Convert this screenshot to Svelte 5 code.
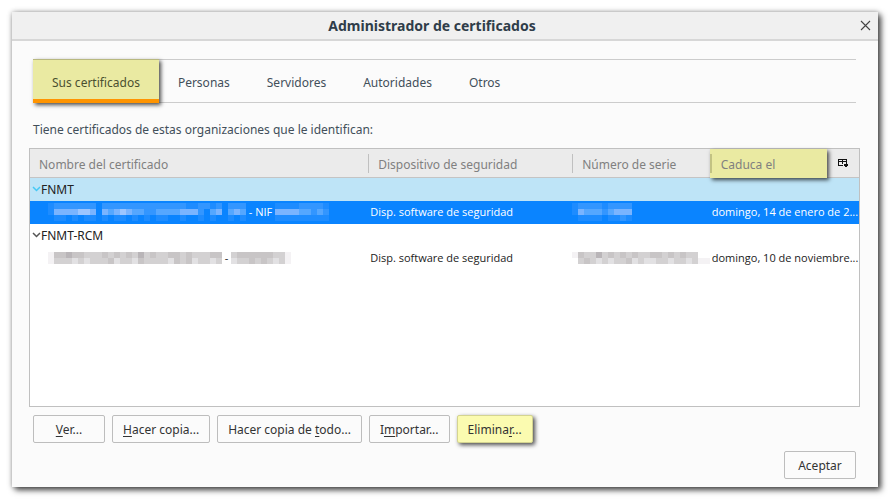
<script lang="ts">
    type Cert = {
        name: string;
        owner: string[];
        idBlocks: string[];
        device: string;
        serial: string[];
        expires: string;
    };

    type Group = {
        org: string;
        certs: Cert[];
    };

    const tabs = ["Sus certificados", "Personas", "Servidores", "Autoridades", "Otros"];
    let activeTab = $state("Sus certificados");
    let selected = $state("FNMT");

    // Hidden data is drawn as rows of cells, one digit per cell (shade index)
    const blues = ["#0a84ff", "#1e8cff", "#3396ff", "#55a7ff", "#7ab4ff", "#9cc5ff"];
    const greys = ["#ffffff", "#f4f2f4", "#e2e1e3", "#d3d1d2", "#c8c5c6", "#b9b5b8"];

    const groups: Group[] = [
        {
            org: "FNMT",
            certs: [
                {
                    name: " - NIF ",
                    owner: [
                        "122222220222222222222221122120222",
                        "144445540434543322333344420340343",
                        "011010110101101010110010010100101",
                    ],
                    idBlocks: ["111122221", "444433232", "111111111"],
                    device: "Disp. software de seguridad",
                    serial: ["1222212222", "1433323444", "0111101121"],
                    expires: "domingo, 14 de enero de 2...",
                },
            ],
        },
        {
            org: "FNMT-RCM",
            certs: [
                {
                    name: " - ",
                    owner: ["14454433343434353433443433344", "13332323334233243333243423323"],
                    idBlocks: ["3444444331", "2334343231"],
                    device: "Disp. software de seguridad",
                    serial: ["14335343434334434343300", "03432323342322332332311"],
                    expires: "domingo, 10 de noviembre...",
                },
            ],
        },
    ];
</script>

{#snippet mosaic(rows: string[], shades: string[])}
    <svg
        class="mosaic"
        width={rows[0].length * 6}
        height={rows.length * 6}
        shape-rendering="crispEdges"
        aria-hidden="true"
    >
        {#each rows as row, y}
            {#each row.split("") as cell, x}
                <rect x={x * 6} y={y * 6} width="6" height="6" fill={shades[Number(cell)]} />
            {/each}
        {/each}
    </svg>
{/snippet}

<div class="dialog" role="dialog" aria-labelledby="title">
    <header>
        <h1 id="title">Administrador de certificados</h1>
        <button class="close" aria-label="Cerrar">
            <svg width="11" height="11" viewBox="0 0 11 11">
                <path d="M1 1L10 10M10 1L1 10" stroke="#444" stroke-width="1.1" fill="none" />
            </svg>
        </button>
    </header>

    <main>
        <div class="tabs" role="tablist">
            {#each tabs as tab}
                <button
                    role="tab"
                    class:active={activeTab === tab}
                    aria-selected={activeTab === tab}
                    onclick={() => (activeTab = tab)}>{tab}</button
                >
            {/each}
        </div>

        <p id="intro">Tiene certificados de estas organizaciones que le identifican:</p>

        <div class="tree">
            <table aria-labelledby="intro">
                <colgroup>
                    <col class="c-name" />
                    <col class="c-device" />
                    <col class="c-serial" />
                    <col />
                    <col class="c-picker" />
                </colgroup>
                <thead>
                    <tr>
                        <th><div>Nombre del certificado</div></th>
                        <th><div class="sep">Dispositivo de seguridad</div></th>
                        <th><div class="sep">Número de serie</div></th>
                        <th class="marked"><div class="sep">Caduca el</div></th>
                        <th class="picker">
                            <button aria-label="Columnas">
                                <svg width="10" height="9" viewBox="0 0 10 9" shape-rendering="crispEdges">
                                    <path
                                        d="M0 0H9V1H0ZM0 2H9V3H0ZM0 1H1V7H0ZM4 1H5V2H4ZM8 1H9V5H8ZM0 6H5V7H0ZM4 3H5V5H4Z"
                                        fill="#111"
                                    />
                                    <path d="M6 5H10V6H6ZM6 6H10V7H6ZM7 7H9V8H7Z" fill="#111" />
                                </svg>
                            </button>
                        </th>
                    </tr>
                </thead>
                <tbody>
                    {#each groups as group}
                        <tr class="group" class:hot={selected === group.org}>
                            <td colspan="5">
                                <button>
                                    <svg width="9" height="8" viewBox="0 0 9 8">
                                        <path
                                            d="M1 2L4.5 5.5L8 2"
                                            stroke="currentColor"
                                            stroke-width="1.5"
                                            fill="none"
                                        />
                                    </svg>
                                    <span>{group.org}</span>
                                </button>
                            </td>
                        </tr>
                        {#each group.certs as cert}
                            {@const shades = selected === group.org ? blues : greys}
                            <tr
                                class="cert"
                                class:selected={selected === group.org}
                                onclick={() => (selected = group.org)}
                            >
                                <td class="name">
                                    <div>
                                        {@render mosaic(cert.owner, shades)}
                                        <span>{cert.name}</span>
                                        {@render mosaic(cert.idBlocks, shades)}
                                    </div>
                                </td>
                                <td>{cert.device}</td>
                                <td class="serial">
                                    <div>
                                        {@render mosaic(cert.serial, shades)}
                                    </div>
                                </td>
                                <td colspan="2">{cert.expires}</td>
                            </tr>
                        {/each}
                    {/each}
                </tbody>
            </table>
        </div>

        <div class="actions">
            <button><u>V</u>er...</button>
            <button><u>H</u>acer copia...</button>
            <button>Hacer copia de <u>t</u>odo...</button>
            <button>I<u>m</u>portar...</button>
            <button class="marked">Elimina<u>r</u>...</button>
        </div>
        <div class="footer">
            <button>Aceptar</button>
        </div>
    </main>
</div>

<style>
    :global(body) {
        margin: 0;
        background: #fff;
    }
    .dialog,
    button {
        font-family: "Noto Sans", "Open Sans", sans-serif;
    }
    button {
        font-size: 12px;
        color: #333;
        background: none;
        border: none;
        padding: 0;
        white-space: nowrap;
    }
    .dialog {
        box-sizing: border-box;
        display: flex;
        flex-direction: column;
        margin: 12px;
        min-height: calc(100vh - 24px);
        background: #fbfbfb;
        font-size: 12px;
        color: #424f5a;
        box-shadow:
            0 0 5px rgba(0, 0, 0, 0.3),
            3px 3px 6px rgba(0, 0, 0, 0.7);
    }
    header {
        display: flex;
        align-items: center;
        height: 27px;
        background: #f0f0f0;
        border-bottom: 2px solid #d7d7d7;
    }
    h1 {
        flex: 1;
        margin: 0;
        text-align: center;
        font-size: 14px;
        line-height: 20px;
        color: #2f3d49;
    }
    .close {
        width: 26px;
        height: 26px;
        display: grid;
        place-items: center;
    }
    main {
        flex: 1;
        display: flex;
        flex-direction: column;
        padding: 18px 18px 8px 17px;
    }
    .tabs {
        display: flex;
        gap: 1px;
        margin: 0 4px;
        border-top: 1px solid #ccc;
        border-bottom: 1px solid #ccc;
    }
    .tabs button {
        height: 42px;
        padding: 2px 18px 0;
        color: #424f5a;
    }
    .tabs .active {
        margin: -1px 0;
        height: 44px;
        padding: 6px 19px 0;
        background: #eaeaa2;
        color: #4a5030;
        border-top: 1px solid #b8b880;
        border-bottom: 4px solid #ff9400;
        box-shadow: 2px 2px 4px rgba(0, 0, 0, 0.7);
    }
    p {
        margin: 18px 4px 9px;
        line-height: 18px;
    }
    .tree {
        flex: 1;
        background: #fff;
        border: 1px solid #c0c0c0;
    }
    table {
        width: 100%;
        table-layout: fixed;
        border-collapse: separate;
        border-spacing: 0;
        font-family: "Open Sans", "Noto Sans", sans-serif;
        font-size: 11px;
        color: #222;
    }
    .c-name {
        width: 40.8%;
    }
    .c-device {
        width: 24.6%;
    }
    .c-serial {
        width: 16.6%;
    }
    .c-picker {
        width: 32px;
    }
    th {
        height: 28px;
        padding: 0;
        background: #ebebeb;
        border-bottom: 1px solid #c4c4c4;
        text-align: left;
        font-family: "Noto Sans", "Open Sans", sans-serif;
        font-size: 12px;
        font-weight: normal;
        color: #808080;
    }
    th div {
        padding: 2px 0 0 9px;
        line-height: 17px;
        white-space: nowrap;
    }
    .sep {
        border-left: 1px solid #c0c0c0;
    }
    th.marked {
        position: relative;
        z-index: 1;
        background: #eaeaa2;
        border-bottom-color: #eaeaa2;
        box-shadow: 2px 2px 4px rgba(0, 0, 0, 0.7);
    }
    .marked .sep {
        border-left: 2px solid #c2c283;
    }
    .picker {
        text-align: center;
    }
    td {
        height: 23px;
        padding: 0 0 1px 2px;
        box-sizing: border-box;
        line-height: 16px;
        white-space: nowrap;
    }
    .group button {
        display: flex;
        align-items: center;
        color: #555;
    }
    .group span {
        color: #222;
    }
    .hot td {
        background: #bee4f7;
    }
    .hot button {
        color: #45c8f5;
    }
    .selected td {
        background: #0a84ff;
        color: #fff;
    }
    td div {
        display: flex;
        align-items: center;
        white-space: pre;
    }
    .name {
        padding-left: 18px;
    }
    .serial {
        padding-left: 0;
    }
    .mosaic {
        flex: none;
    }
    .actions {
        display: flex;
        gap: 7px;
        margin: 8px 4px;
    }
    .footer {
        display: flex;
        justify-content: flex-end;
        margin: 0 4px;
    }
    .actions button,
    .footer button {
        min-width: 72px;
        height: 28px;
        padding: 1px 10px 0;
        border: 1px solid #bdbdbd;
        border-radius: 2px;
    }
    .actions .marked {
        background: #fbfbb0;
        border-color: #d4d490;
        box-shadow: 2px 2px 4px rgba(0, 0, 0, 0.7);
    }
    u {
        text-underline-offset: 2px;
    }
</style>
